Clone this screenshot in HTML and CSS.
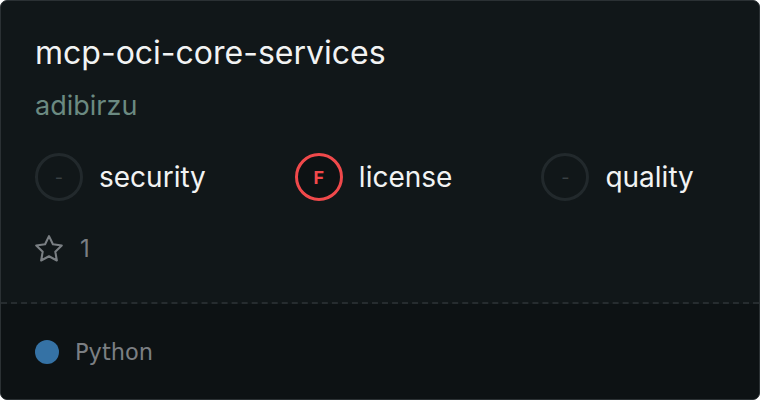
FILE: index.html
```html
<!DOCTYPE html>
<html lang="en">
<head>
  <meta charset="UTF-8" />
  <title>mcp-oci-core-services</title>
  <link rel="stylesheet" href="styles.css">
</head>
<body>
  <div class="card">
    <div class="card-main">
      <h2 class="repo-name">mcp-oci-core-services</h2>
      <div class="owner">adibirzu</div>

      <div class="scores">
        <div class="score">
          <span class="badge badge-none">-</span>
          <span class="score-label">security</span>
        </div>
        <div class="score">
          <span class="badge badge-f">F</span>
          <span class="score-label">license</span>
        </div>
        <div class="score">
          <span class="badge badge-none">-</span>
          <span class="score-label">quality</span>
        </div>
      </div>

      <div class="stars">
        <svg width="28" height="28" viewBox="2 2 20 20" fill="none" stroke="currentColor" stroke-width="1.5" stroke-linejoin="round">
          <path d="M12 2.8l2.8 5.8 6.3.9-4.6 4.4 1.1 6.3L12 17.2l-5.6 3 1.1-6.3-4.6-4.4 6.3-.9z" />
        </svg>
        <span>1</span>
      </div>
    </div>

    <div class="card-footer">
      <span class="lang-dot"></span>
      <span class="lang">Python</span>
    </div>
  </div>
</body>
</html>
```

FILE: styles.css
```css
html, body {
  margin: 0;
  height: 100%;
  background: #ffffff;
}
body {
  font-family: Inter, "Noto Sans", sans-serif;
}
.card {
  box-sizing: border-box;
  height: 400px;
  width: 760px;
  border: 1px solid #2b3134;
  border-radius: 7px;
  background: #111719;
  overflow: hidden;
  display: flex;
  flex-direction: column;
}
.card-main {
  padding: 32px 34px 0 34px;
  height: 269px;
  border-bottom: 2px dashed #262c2f;
}
.repo-name {
  margin: 0;
  font-size: 32px;
  font-weight: 400;
  color: #f2f3f3;
  line-height: 40px;
}
.owner {
  margin-top: 16px;
  font-size: 27px;
  color: #6b8a81;
  line-height: 34px;
}
.scores {
  display: flex;
  gap: 89px;
  margin-top: 30px;
}
.score {
  display: flex;
  align-items: center;
  gap: 16px;
}
.badge {
  box-sizing: border-box;
  width: 48px;
  height: 48px;
  border-radius: 50%;
  display: flex;
  align-items: center;
  justify-content: center;
  font-size: 18px;
  font-weight: 700;
}
.badge-none {
  border: 3px solid #22292c;
  color: #3a4144;
  font-weight: 400;
}
.badge-f {
  border: 3px solid #f0494b;
  color: #f0494b;
  background: #0d1214;
}
.score-label {
  font-size: 28px;
  color: #f2f3f3;
}
.stars {
  display: flex;
  align-items: center;
  gap: 17px;
  margin-top: 33px;
  color: #7a7f83;
  font-size: 24px;
  line-height: 29px;
}
.card-footer {
  flex: 1;
  background: #0d1214;
  display: flex;
  align-items: center;
  padding: 0 34px;
  gap: 16px;
}
.lang-dot {
  width: 24px;
  height: 24px;
  border-radius: 50%;
  background: #3572a5;
}
.lang {
  font-family: "DejaVu Sans", sans-serif;
  font-size: 22.5px;
  color: #7b7f83;
}
```
